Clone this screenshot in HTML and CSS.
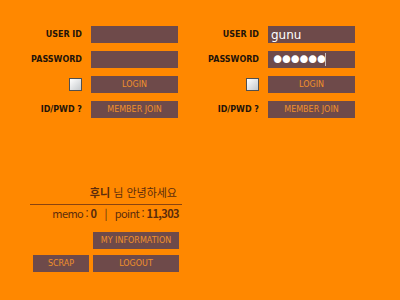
FILE: index.html
```html
<!DOCTYPE html>
<html lang="ko">
<head>
    <meta charset="UTF-8">
    <title>Login</title>
    <link rel="stylesheet" href="styles.css">
</head>
<body>

<div class="logins">
    <form class="login">
        <label class="lbl" for="uid1">USER ID</label>
        <input class="field" type="text" id="uid1" name="uid">
        <label class="lbl" for="pwd1">PASSWORD</label>
        <input class="field" type="password" id="pwd1" name="pwd">
        <span class="lbl"><input class="save" type="checkbox" name="save"></span>
        <button class="btn" type="submit">LOGIN</button>
        <span class="lbl">ID/PWD ?</span>
        <button class="btn" type="button">MEMBER JOIN</button>
    </form>

    <form class="login">
        <label class="lbl" for="uid2">USER ID</label>
        <input class="field" type="text" id="uid2" name="uid" value="gunu">
        <label class="lbl" for="pwd2">PASSWORD</label>
        <div class="pwbox">
            <input class="field" type="password" id="pwd2" name="pwd" value="gunugu">
            <span class="caret"></span>
        </div>
        <span class="lbl"><input class="save" type="checkbox" name="save"></span>
        <button class="btn" type="submit">LOGIN</button>
        <span class="lbl">ID/PWD ?</span>
        <button class="btn" type="button">MEMBER JOIN</button>
    </form>
</div>

<div class="member">
    <p class="hello"><b>후니</b> 님 안녕하세요</p>
    <p class="stats">memo : <b>0</b><span class="sep">|</span>point : <b>11,303</b></p>
    <div class="actions">
        <button class="btn info" type="button">MY INFORMATION</button>
        <button class="btn" type="button">SCRAP</button>
        <button class="btn" type="button">LOGOUT</button>
    </div>
</div>

</body>
</html>
```

FILE: styles.css
```css
body {
    margin: 0;
    padding: 26px 0 0 8px;
    background: #ff8800;
    font-family: "DejaVu Sans", sans-serif;
}

.logins {
    display: flex;
    gap: 7px;
}

.login {
    display: grid;
    grid-template-columns: 74px 87px;
    grid-auto-rows: 17px;
    column-gap: 9px;
    row-gap: 8px;
}

.lbl {
    display: flex;
    align-items: center;
    justify-content: flex-end;
    font-size: 8px;
    font-weight: bold;
    color: #24140a;
}

.field {
    width: 100%;
    height: 17px;
    padding: 0 3px;
    border: none;
    outline: none;
    box-sizing: border-box;
    background: #6e4a4a;
    color: #fff;
    font-family: "DejaVu Sans", sans-serif;
    font-size: 12px;
}

.field[type="password"] {
    padding: 0 2px;
    font-size: 26px;
    letter-spacing: -6.6px;
}

.pwbox {
    position: relative;
}

.caret {
    position: absolute;
    left: 57px;
    top: 2px;
    width: 1px;
    height: 13px;
    background: #c8c0c0;
}

.save {
    appearance: none;
    width: 13px;
    height: 13px;
    margin: 0;
    border: 1px solid #505050;
    box-sizing: border-box;
    background: linear-gradient(135deg, #ffffff, #c4c8cc);
}

.btn {
    height: 17px;
    padding: 0;
    border: none;
    background: #6e4a4a;
    color: #f0902c;
    font-family: "DejaVu Sans", sans-serif;
    font-size: 8px;
    cursor: pointer;
}

.member {
    width: 152px;
    margin: 65px 0 0 22px;
    font-family: "Noto Sans CJK KR", "DejaVu Sans", sans-serif;
    color: #5c2c0c;
}

.hello {
    margin: 0;
    padding: 0 5px 3px 0;
    line-height: 18px;
    font-size: 11px;
    text-align: right;
    border-bottom: 1px solid #8a4410;
}

.stats {
    margin: 0;
    padding-right: 3px;
    line-height: 16px;
    font-size: 11px;
    text-align: right;
    letter-spacing: -0.6px;
}

.sep {
    margin: 0 8px;
}

.actions {
    display: grid;
    grid-template-columns: 56px 86px;
    grid-auto-rows: 17px;
    gap: 6px 4px;
    margin: 11px 0 0 3px;
}

.info {
    grid-column: 2;
}
```
